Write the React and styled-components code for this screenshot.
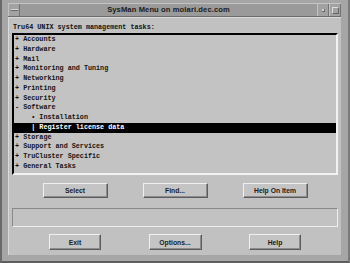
import styled, { createGlobalStyle } from 'styled-components';

const GlobalStyle = createGlobalStyle`
    * {
        box-sizing: border-box;
        margin: 0;
        padding: 0;
    }
    body {
        background: #8e8e8e;
        font-family: 'Liberation Sans', Arial, sans-serif;
    }
`;

const tasks = [
    { marker: '+', label: 'Accounts' },
    { marker: '+', label: 'Hardware' },
    { marker: '+', label: 'Mail' },
    { marker: '+', label: 'Monitoring and Tuning' },
    { marker: '+', label: 'Networking' },
    { marker: '+', label: 'Printing' },
    { marker: '+', label: 'Security' },
    { marker: '-', label: 'Software' },
    { marker: '•', label: 'Installation', depth: 1 },
    { marker: '|', label: 'Register license data', depth: 1, selected: true },
    { marker: '+', label: 'Storage' },
    { marker: '+', label: 'Support and Services' },
    { marker: '+', label: 'TruCluster Specific' },
    { marker: '+', label: 'General Tasks' },
];

function App() {
    return (
        <>
            <GlobalStyle />
            <Window>
                <TitleBar>
                    <TitleButton>
                        <MenuDash />
                    </TitleButton>
                    <Title>SysMan Menu on molari.dec.com</Title>
                    <TitleButton>
                        <MinDot />
                    </TitleButton>
                    <TitleButton>
                        <MaxBox />
                    </TitleButton>
                </TitleBar>
                <Client>
                    <Label>Tru64 UNIX system management tasks:</Label>
                    <ListBox>
                        {tasks.map((task) => (
                            <Row key={task.label} $selected={task.selected}>
                                {task.depth ? '    ' : ''}
                                {task.marker} {task.label}
                            </Row>
                        ))}
                    </ListBox>
                    <ButtonRow>
                        <PushButton $width={65}>Select</PushButton>
                        <PushButton $width={65}>Find...</PushButton>
                        <PushButton $width={65}>Help On Item</PushButton>
                    </ButtonRow>
                    <StatusField />
                    <ButtonRow $gap={7}>
                        <PushButton $width={52} $height={16}>
                            Exit
                        </PushButton>
                        <PushButton $width={53} $height={16}>
                            Options...
                        </PushButton>
                        <PushButton $width={52} $height={16}>
                            Help
                        </PushButton>
                    </ButtonRow>
                </Client>
            </Window>
        </>
    );
}

const Window = styled.div`
    width: 350px;
    height: 263px;
    display: flex;
    flex-direction: column;
    background: #a6a6a6;
    padding: 3px 7px 6px 6px;
    border-left: 2px solid #6a6a6a;
    border-bottom: 2px solid #5e5e5e;
    border-right: 2px solid #7a7a7a;
`;

const TitleBar = styled.div`
    display: flex;
    align-items: stretch;
    height: 14px;
    background: #9a9a9a;
    border-top: 1px solid #c4c4c4;
    border-bottom: 1px solid #6c6c6c;
`;

const TitleButton = styled.div`
    width: 12px;
    display: flex;
    align-items: center;
    justify-content: center;
    border-left: 1px solid #c2c2c2;
    border-right: 1px solid #737373;
    background: #a2a2a2;
`;

const MenuDash = styled.div`
    width: 7px;
    height: 2px;
    background: #d8d8d8;
    border-bottom: 1px solid #6a6a6a;
`;

const MinDot = styled.div`
    width: 3px;
    height: 3px;
    background: #d4d4d4;
    border-right: 1px solid #6a6a6a;
    border-bottom: 1px solid #6a6a6a;
`;

const MaxBox = styled.div`
    width: 7px;
    height: 7px;
    border: 1px solid #dcdcdc;
    border-right-color: #666666;
    border-bottom-color: #666666;
`;

const Title = styled.div`
    flex: 1;
    text-align: center;
    font-family: 'Liberation Sans', Arial, sans-serif;
    font-weight: 700;
    font-size: 7.6px;
    line-height: 12px;
    color: #1a1a1a;
    letter-spacing: 0.1px;
`;

const Client = styled.div`
    flex: 1;
    display: flex;
    flex-direction: column;
    background: #c1c1c1;
    padding: 5px 3px 0 3px;
    border-top: 1px solid #dadada;
    border-left: 1px solid #dadada;
`;

const Label = styled.div`
    font-family: 'Liberation Mono', 'Courier New', monospace;
    font-weight: 700;
    font-size: 6.75px;
    line-height: 8px;
    color: #111111;
    padding-left: 1px;
    white-space: pre;
`;

const ListBox = styled.div`
    margin-top: 2px;
    height: 142px;
    border: 2px solid #000000;
    border-right-color: #f2f2f2;
    border-bottom-color: #f2f2f2;
    background: #c3c3c3;
    display: flex;
    flex-direction: column;
`;

const Row = styled.div`
    height: 9.77px;
    line-height: 9.77px;
    font-family: 'Liberation Mono', 'Courier New', monospace;
    font-weight: 700;
    font-size: 6.75px;
    white-space: pre;
    padding-left: 1px;
    color: ${(props) => (props.$selected ? '#ffffff' : '#141414')};
    background: ${(props) => (props.$selected ? '#000000' : 'transparent')};
`;

const ButtonRow = styled.div`
    display: grid;
    grid-template-columns: repeat(3, 100px);
    justify-content: center;
    justify-items: center;
    margin-top: ${(props) => props.$gap || 8}px;
`;

const PushButton = styled.div`
    width: ${(props) => props.$width}px;
    height: ${(props) => props.$height || 15}px;
    display: flex;
    align-items: center;
    justify-content: center;
    background: #c4c4c4;
    border: 1px solid #f0f0f0;
    border-right-color: #5c5c5c;
    border-bottom-color: #5c5c5c;
    box-shadow: inset -1px -1px 0 #8c8c8c;
    font-family: 'Liberation Sans', Arial, sans-serif;
    font-weight: 700;
    font-size: 6.8px;
    color: #1c1c1c;
`;

const StatusField = styled.div`
    margin-top: 10px;
    height: 19px;
    border: 1px solid #8a8a8a;
    border-right-color: #eeeeee;
    border-bottom-color: #eeeeee;
    background: #c2c2c2;
`;

export default App;
